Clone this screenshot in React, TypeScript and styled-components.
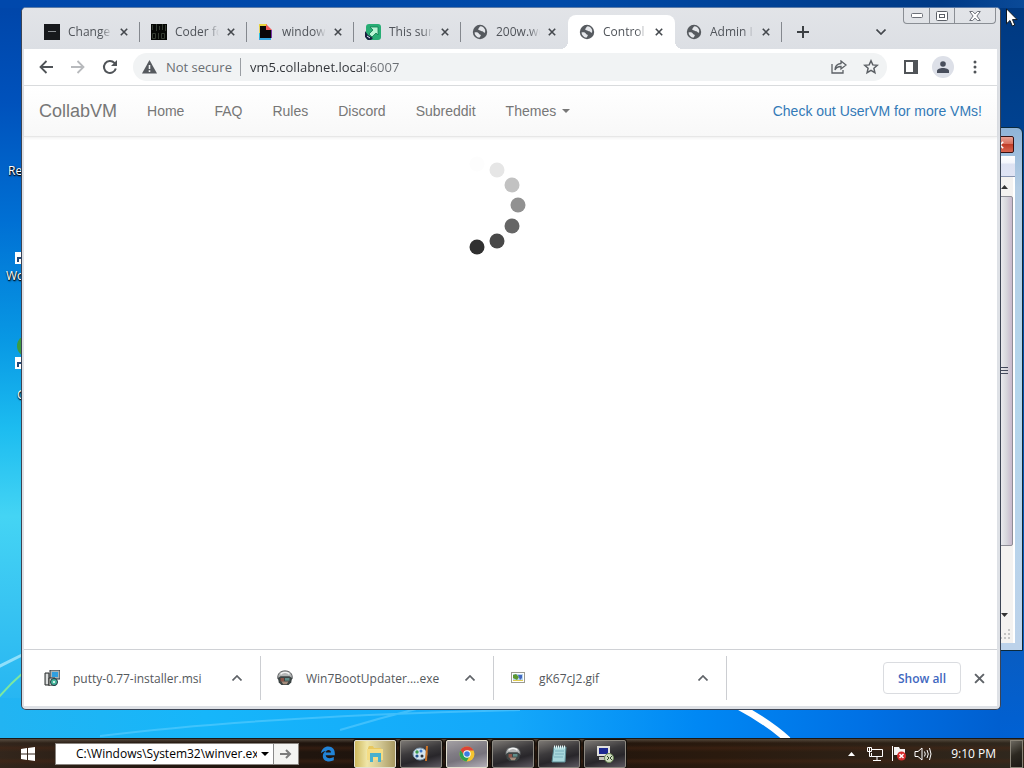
import React from "react";
import styled, { createGlobalStyle, css } from "styled-components";

const ui = `"Open Sans", "Noto Sans", sans-serif`;
const web = `"Liberation Sans", Arial, sans-serif`;

const GlobalStyle = createGlobalStyle`
  *, *::before, *::after { box-sizing: border-box; }
  html, body, #root { height: 100%; }
  body { margin: 0; overflow: hidden; font-family: ${ui}; font-size: 12px; }
  button, input { font: inherit; color: inherit; margin: 0; padding: 0; border: 0; background: none; outline: 0; }
  button { display: flex; align-items: center; justify-content: center; cursor: pointer; }
  a { text-decoration: none; }
  svg { display: block; flex: none; }
`;

const Screen = styled.div`
  height: 100vh;
  display: flex;
  flex-direction: column;
  overflow: hidden;
`;

const Desktop = styled.main`
  position: relative;
  flex: 1;
  min-height: 0;
  overflow: hidden;
  background:
    linear-gradient(to right, #0048ac 0%, #004aa8 55%, #003a86 92%, #0a4a98 100%) top / 100% 8px no-repeat,
    linear-gradient(to bottom, #00387f 0, #00418f 120px, #0a5cc0 640px, #0061d4 100%) right / 24px 100% no-repeat,
    linear-gradient(to right, #22b4f2 0, #16b6fa 20%, #14a8fa 50%, #0088f4 68%, #0070e4 85%, #005ccc 100%) bottom / 100% 40px no-repeat,
    linear-gradient(to bottom, #0045a8 0, #0052bc 14%, #0070d4 30%, #0898e4 46%, #1cbcf0 58%, #44d4f4 70%, #38c4f2 82%, #20b0f2 100%);
`;

const Streaks = styled.svg`
  position: absolute;
  left: 0;
  bottom: 0;
  width: 100%;
  height: 120px;
`;

const Shortcut = styled.span<{ $x: number; $y: number }>`
  position: absolute;
  left: ${(p) => p.$x}px;
  top: ${(p) => p.$y}px;
  color: #fff;
  font-size: 12px;
  line-height: 16px;
  white-space: nowrap;
  text-shadow: 1px 1px 2px #000, 0 1px 1px #000;
`;

const ShortcutIcon = styled.svg<{ $y: number }>`
  position: absolute;
  left: 14px;
  top: ${(p) => p.$y}px;
`;

const Pointer = styled.svg`
  position: absolute;
  right: 6px;
  top: 8px;
`;

/* Window behind the browser */

const BackWindow = styled.section`
  position: absolute;
  top: 127px;
  right: 1px;
  bottom: 87px;
  width: 320px;
  display: flex;
  flex-direction: column;
  padding: 0 7px 7px;
  border: 1px solid #0b2a3c;
  border-radius: 6px 6px 0 0;
  background: linear-gradient(to bottom, #8fb4d8 0, #b4cde4 60px, #b4d6ec 50%, #bcd2ea 100%);
`;

const BackTitle = styled.header`
  display: flex;
  justify-content: flex-end;
  height: 28px;
  padding-top: 8px;
`;

const BackClose = styled.button`
  width: 44px;
  height: 17px;
  margin-right: 1px;
  justify-content: flex-end;
  padding-right: 9px;
  border: 1px solid #3a1214;
  border-radius: 2px;
  color: #fff;
  font-size: 12px;
  background: linear-gradient(to bottom, #e8a194 0, #d8705e 45%, #c03c28 50%, #d86650 100%);
`;

const BackMenu = styled.div`
  height: 21px;
  border-bottom: 1px solid #8894b0;
  background: linear-gradient(to bottom, #fff 0, #f4f6fc 35%, #dde2f2 40%, #e0e4f4 100%);
`;

const BackBody = styled.div`
  flex: 1;
  display: flex;
  justify-content: flex-end;
  background: #fff;
`;

const ScrollTrack = styled.div`
  width: 19px;
  display: flex;
  flex-direction: column;
  align-items: center;
  background: #f4f2f0;
  border-right: 2px solid #fff;
`;

const ScrollThumb = styled.div`
  width: 16px;
  flex: 0 1 350px;
  display: flex;
  align-items: center;
  justify-content: center;
  border: 1px solid #8e8e96;
  border-radius: 2px;
  background: linear-gradient(to right, #f4f4f6, #d6d6dc 60%, #c8b8cc);
`;

const ScrollArrow = styled.div`
  height: 19px;
  display: flex;
  align-items: center;
`;

const Filler = styled.div`
  flex: 1;
`;

/* Browser window */

const Browser = styled.section`
  position: absolute;
  inset: 7px 23px 28px 21px;
  display: flex;
  flex-direction: column;
  border: 1px solid #3c4454;
  border-top-color: #5c7ca8;
  border-radius: 5px;
  background: #dee1e6;
  overflow: hidden;
`;

const TabStrip = styled.header`
  display: flex;
  height: 41px;
  padding: 0 4px 0 11px;
  align-items: flex-end;
  background: linear-gradient(to bottom, #e2e4e8, #dcdfe4);
`;

const Tab = styled.div<{ $active?: boolean; $divider?: boolean }>`
  position: relative;
  width: 107px;
  height: 34px;
  display: flex;
  align-items: center;
  padding-left: 11px;
  color: #50545a;
  ${(p) =>
    p.$active &&
    css`
      background: #fff;
      border-radius: 8px 8px 0 0;
      &::before, &::after {
        content: "";
        position: absolute;
        bottom: 0;
        width: 8px;
        height: 8px;
      }
      &::before { left: -8px; background: radial-gradient(circle at 0 0, transparent 8px, #fff 8px); }
      &::after { right: -8px; background: radial-gradient(circle at 100% 0, transparent 8px, #fff 8px); }
    `}
  ${(p) =>
    p.$divider &&
    css`
      &::after {
        content: "";
        position: absolute;
        right: 0;
        top: 7px;
        width: 1px;
        height: 20px;
        background: #84888e;
      }
    `}
`;

const TabTitle = styled.button`
  width: 44px;
  margin-left: 8px;
  justify-content: flex-start;
  overflow: hidden;
  white-space: nowrap;
  line-height: 18px;
  mask-image: linear-gradient(to right, #000 75%, transparent 100%);
`;

const TabClose = styled.button`
  width: 16px;
  height: 16px;
  margin-left: 4px;
`;

const StripButton = styled.button<{ $end?: boolean }>`
  width: 24px;
  height: 34px;
  margin-left: ${(p) => (p.$end ? "auto" : "9px")};
  margin-right: ${(p) => (p.$end ? "10px" : "0")};
`;

const Caption = styled.div`
  align-self: flex-start;
  display: flex;
  height: 16px;
  border: 1px solid #8a8e94;
  border-top: 0;
  border-radius: 0 0 4px 4px;
`;

const CaptionButton = styled.button<{ $wide?: boolean }>`
  width: ${(p) => (p.$wide ? 41 : 25)}px;
  & + & { border-left: 1px solid #8a8e94; }
`;

const Frame = styled.div`
  flex: 1;
  min-height: 0;
  display: flex;
  flex-direction: column;
  margin: 0 3px 3px 2px;
  background: #fff;
`;

const Toolbar = styled.div`
  display: flex;
  align-items: center;
  height: 37px;
  padding: 0 6px;
  border-bottom: 1px solid #dcdee0;
  background: #fff;
`;

const ToolButton = styled.button`
  width: 32px;
  height: 28px;
`;

const Avatar = styled.span`
  width: 22px;
  height: 22px;
  border-radius: 50%;
  display: flex;
  align-items: center;
  justify-content: center;
  background: #dde0e8;
`;

const Omnibox = styled.div`
  flex: 1;
  height: 28px;
  margin: 0 8px 0 7px;
  padding-left: 8px;
  display: flex;
  align-items: center;
  border-radius: 14px;
  background: #f1f3f4;
  font-size: 13px;
  color: #6a6e73;
`;

const Secure = styled.button`
  gap: 8px;
  padding-right: 8px;
  white-space: nowrap;
  border-right: 1px solid #9a9ea3;
`;

const Address = styled.input`
  flex: 1;
  min-width: 0;
  height: 20px;
  margin-left: 9px;
  background: linear-gradient(to right, #303338 115px, #6a6e73 115px);
  background-clip: text;
  -webkit-background-clip: text;
  -webkit-text-fill-color: transparent;
`;

const NavBar = styled.nav`
  display: flex;
  align-items: center;
  height: 51px;
  border-bottom: 1px solid #e7e7e7;
  background: linear-gradient(to bottom, #fff, #f8f8f8);
  box-shadow: 0 1px 3px rgba(0, 0, 0, 0.07);
  font-family: ${web};
  font-size: 14px;
  line-height: 20px;
  color: #777;
`;

const NavLink = styled.a<{ $kind?: "brand" | "promo" }>`
  display: flex;
  align-items: center;
  padding: 0 15px;
  white-space: nowrap;
  color: ${(p) => (p.$kind === "promo" ? "#337ab7" : "#777")};
  font-size: ${(p) => (p.$kind === "brand" ? 18 : 14)}px;
  margin-left: ${(p) => (p.$kind === "promo" ? "auto" : "0")};
`;

const Caret = styled.span`
  margin-left: 6px;
  border: 4px solid transparent;
  border-top-color: #777;
  border-bottom: 0;
`;

const Page = styled.div`
  flex: 1;
  display: flex;
  justify-content: center;
  align-items: flex-start;
  padding: 19px 51px 0 0;
`;

const Shelf = styled.footer`
  display: flex;
  align-items: center;
  height: 57px;
  padding: 0 6px 0 4px;
  border-top: 1px solid #d0d2d6;
`;

const Download = styled.div`
  width: 233px;
  height: 44px;
  display: flex;
  align-items: center;
  padding: 0 11px 0 16px;
  border-right: 1px solid #ccced2;
`;

const FileName = styled.button`
  flex: 1;
  justify-content: flex-start;
  gap: 13px;
  white-space: nowrap;
  color: #54585c;
`;

const FileIcon = styled.span`
  width: 16px;
  display: flex;
  justify-content: center;
`;

const SmallButton = styled.button`
  width: 24px;
  height: 24px;
`;

const ShowAll = styled.button`
  width: 78px;
  height: 32px;
  margin: 0 6px 0 auto;
  border: 1px solid #dadce0;
  border-radius: 4px;
  color: #3f68c0;
  font-weight: 600;
`;

/* Taskbar */

const Taskbar = styled.footer`
  display: flex;
  align-items: center;
  height: 30px;
  border-top: 1px solid #1c1814;
  color: #fff;
  background:
    linear-gradient(to bottom, rgba(120, 110, 95, 0.55) 0, transparent 4px),
    repeating-linear-gradient(to bottom, transparent 0 6px, rgba(80, 40, 20, 0.4) 9px, transparent 13px),
    linear-gradient(to right, #33261c 0, #241810 15%, #1c120c 45%, #2a1a0e 70%, #30281e 100%);
`;

const StartButton = styled.button`
  width: 55px;
  height: 28px;
`;

const AddressBar = styled.form`
  display: flex;
  width: 244px;
  height: 22px;
  border: 1px solid #8a8580;
  background: #fff;
  color: #000;
`;

const PathInput = styled.input`
  flex: 1;
  min-width: 0;
  margin-left: 20px;
`;

const PathButton = styled.button<{ $go?: boolean }>`
  width: ${(p) => (p.$go ? 25 : 16)}px;
  ${(p) => p.$go && "border-left: 1px solid #8a8a8a; background: #f4f4f2;"}
`;

const PinButton = styled.button`
  width: 40px;
  height: 28px;
  margin: 0 6px 0 9px;
`;

const TaskButton = styled.button<{ $tone?: "gold" | "light" }>`
  width: 42px;
  height: 28px;
  margin-right: 4px;
  border: 1px solid #8c8880;
  border-radius: 2px;
  box-shadow: 0 0 0 1px #14100c;
  background: ${(p) =>
    p.$tone === "gold"
      ? "linear-gradient(to right, #cdb85c, #f0e6a8 30%, #cfc490 65%, #a89860)"
      : p.$tone === "light"
      ? "linear-gradient(165deg, #a4a0a4 0, #807c84 40%, #77737c 60%, #b4b0b8 100%)"
      : "linear-gradient(165deg, #7c7874 0, #3c3a3c 40%, #28262a 65%, #5c5860 100%)"};
  border-color: ${(p) => (p.$tone ? "#e4e0d0" : "#8c8880")};
`;

const Tray = styled.div`
  display: flex;
  align-items: center;
  margin-left: auto;
  height: 28px;
`;

const TrayButton = styled.button`
  width: 24px;
  height: 24px;
`;

const Clock = styled.time`
  margin: 0 14px 0 16px;
  white-space: nowrap;
`;

const ShowDesktop = styled.button`
  width: 13px;
  height: 28px;
  margin-right: 1px;
  border: 1px solid #8a8478;
  background: linear-gradient(150deg, #6c6860, #2c2820 50%, #1c1814);
`;

/* Drawings */

const Cross = ({ size = 8, color = "#44484d", width = 2 }) => (
  <svg width={size} height={size} viewBox="0 0 10 10" fill="none" stroke={color} strokeWidth={width}>
    <path d="M1 1 9 9M9 1 1 9" />
  </svg>
);

const Chevron = ({ down = false, color = "#5f6368" }) => (
  <svg width="10" height="6" viewBox="0 0 10 6" fill="none" stroke={color} strokeWidth="1.7">
    <path d={down ? "M.5.5 5 5 9.5.5" : "M.5 5.5 5 1l4.500 4.500"} />
  </svg>
);

const Triangle = ({ up = false, color = "#000", w = 8 }) => (
  <svg width={w} height="4" viewBox="0 0 8 4" preserveAspectRatio="none">
    <path d={up ? "M0 4 4 0l4 4z" : "M0 0h8L4 4z"} fill={color} />
  </svg>
);

const Globe = () => (
  <svg width="16" height="16" viewBox="0 0 16 16">
    <circle cx="8" cy="8" r="7.200" fill="#565a5f" />
    <path
      d="M2.500 8.500c1.800-.4 3.600-.2 4.300 1.100.6 1.200 1.900.7 2 2 .1 1-1.100 1.100-1.300 2.100C4.800 13.500 2.700 11.400 2.500 8.500zM8.600 2.300c-1.500.6-1 1.500-2 2.100-.8.500-.4 1.700.9 1.800 1.200 0 1.300 1.100 2.500 1 1.400-.2 1.200 1.500 3 1.500.9-2.600-.8-6-4.400-6.400z"
      fill="#e4e6ea"
    />
  </svg>
);

const DarkDash = () => (
  <svg width="16" height="16">
    <rect width="16" height="16" fill="#17191c" />
    <rect x="4" y="7" width="8" height="1" fill="#8a8e92" />
  </svg>
);

const Matrix = () => (
  <svg width="16" height="16" fill="none" stroke="#343c32">
    <rect width="16" height="16" fill="#060806" stroke="none" />
    <path d="M1.500 1v5M5.500 0v7M8.500 2v4M11.500 0v6M14.500 1v6M1.500 9.500h3v5h-3zM7.500 9v6M10.500 9.500h3v5h-3z" />
  </svg>
);

const ColorFile = () => (
  <svg width="16" height="16">
    <path d="M1 0h8v3H1z" fill="#e8d33c" />
    <path d="M1 3h3v11H1z" fill="#e0d060" />
    <path d="M1 9h3v6H1z" fill="#29c0dc" />
    <path d="M8 0l6 6H8z" fill="#ef5a5a" />
    <path d="M11 6h3v8h-3z" fill="#7838a8" />
    <path d="M1 13h12v3H1z" fill="#38a8e0" />
    <path d="M2 2h6v4h5v8H2z" fill="#0a0808" />
  </svg>
);

const GreenArrow = () => (
  <svg width="16" height="16">
    <rect x="1" width="15" height="16" rx="3" fill="#27ad74" />
    <path d="M5 3h8v8l-2-2-4 4-3-3 4-4z" fill="#b8f4d4" stroke="#107850" strokeWidth=".8" />
    <path d="M0 7l3 4 5 3-2 2H3l-3-3z" fill="#182040" />
    <path d="M2 12l3 2" stroke="#e8f4ff" />
  </svg>
);

const PuttyIcon = () => (
  <svg width="16" height="16">
    <rect x="6" y="0" width="10" height="9" fill="#a8b4b8" stroke="#303438" />
    <rect x="8" y="2" width="6" height="5" fill="#2f9fe0" />
    <path d="M1 3h4v12H1z" fill="#b8bcbc" stroke="#2c3030" />
    <path d="M3 4v10" stroke="#fff" />
    <path d="M5 8h6v8H5z" fill="#d8dcd0" stroke="#303030" />
    <circle cx="10" cy="12" r="3.500" fill="#46b89c" stroke="#234" />
    <circle cx="10" cy="12" r="1" fill="#fff" />
  </svg>
);

const HelmetIcon = () => (
  <svg width="16" height="16" viewBox="0 0 18 18">
    <path d="M1 10C0 4 4 1 9 1s9 3 8 9z" fill="#b4b6b6" stroke="#4c4e50" />
    <path d="M4 5c2-3 8-3 10 0" stroke="#f4f4f4" strokeWidth="1.500" fill="none" />
    <path d="M1 9l3-2h10l3 2-1 5-3 3H5l-3-3z" fill="#3c4444" />
    <path d="M4 9h4v4H4z" fill="#8c5448" />
    <path d="M9 9h5v3H9z" fill="#5f8c88" />
    <path d="M5 13h8l-2 3H7z" fill="#a48c7c" />
  </svg>
);

const GifIcon = () => (
  <svg width="14" height="12">
    <rect x=".5" y=".5" width="13" height="10" fill="#fff" stroke="#9a9a90" />
    <rect x="2" y="2" width="10" height="7" fill="#b8d8f0" />
    <path d="M2 3l3-1 3 3-2 3-4-2z" fill="#5c9830" />
    <path d="M7 3h4v3l-2 2z" fill="#4468c0" />
    <path d="M2 8h10v1H2z" fill="#e0cc50" />
  </svg>
);

const spinnerDots: [number, number, string][] = [
  [42, 8, "#fdfdfd"],
  [62, 14, "#e6e6e6"],
  [77, 29, "#c2c2c2"],
  [83, 49, "#919191"],
  [77, 70, "#666"],
  [62, 85, "#484848"],
  [42, 91, "#303030"],
];

const Spinner = () => (
  <svg width="100" height="100" role="img" aria-label="Loading">
    {spinnerDots.map(([x, y, fill]) => (
      <circle key={y} cx={x} cy={y} r="7.500" fill={fill} />
    ))}
  </svg>
);

const tabs = [
  { title: "Change", icon: <DarkDash />, divider: true },
  { title: "Coder fo", icon: <Matrix />, divider: true },
  { title: "window", icon: <ColorFile />, divider: true },
  { title: "This sur", icon: <GreenArrow />, divider: true },
  { title: "200w.we", icon: <Globe /> },
  { title: "Control", icon: <Globe />, active: true },
  { title: "Admin I", icon: <Globe />, divider: true },
];

const downloads = [
  { name: "putty-0.77-installer.msi", icon: <PuttyIcon /> },
  { name: "Win7BootUpdater....exe", icon: <HelmetIcon /> },
  { name: "gK67cJ2.gif", icon: <GifIcon /> },
];

const tasks: { name: string; tone?: "gold" | "light"; icon: React.ReactNode }[] = [
  {
    name: "Explorer",
    tone: "gold",
    icon: (
      <svg width="18" height="18">
        <path d="M2 3l1-2h4l1 2h7v4H2z" fill="#e8c860" />
        <path d="M1 4h16v11H1z" fill="#f4dc84" />
        <path d="M4 17V8h11v9h-3v-5H7v5z" fill="#48b0cc" />
      </svg>
    ),
  },
  {
    name: "Paint",
    icon: (
      <svg width="18" height="18">
        <ellipse cx="8" cy="9" rx="7" ry="6" fill="#d4e4ee" stroke="#7c98b0" />
        <circle cx="5" cy="7" r="1.700" fill="#3c9c50" />
        <circle cx="9" cy="6" r="1.500" fill="#3c74c8" />
        <circle cx="5" cy="11" r="1.600" fill="#20508c" />
        <circle cx="10" cy="11" r="1.500" fill="#30343c" />
        <path d="M14 1h2l-1 15h-2z" fill="#cc7428" />
      </svg>
    ),
  },
  {
    name: "Chrome",
    tone: "light",
    icon: (
      <svg width="16" height="16" viewBox="0 0 16 16">
        <circle cx="8" cy="8" r="7.500" fill="#f4c430" />
        <path d="M1.500 4.300A7.500 7.500 0 0 1 14.600 4.500H8L5 10z" fill="#dc4437" />
        <path d="M1.500 4.300A7.500 7.500 0 0 0 7.500 15.500l3.500-6-6-.5z" fill="#30a050" />
        <circle cx="8" cy="8" r="3.700" fill="#fff" />
        <circle cx="8" cy="8" r="2.800" fill="#3c7ce0" />
      </svg>
    ),
  },
  { name: "Win7BootUpdater", icon: <HelmetIcon /> },
  {
    name: "Notepad",
    icon: (
      <svg width="16" height="18">
        <path d="M3 2h12l-1 15H1z" fill="#a8d8dc" stroke="#5c8c94" />
        <path d="M4 6h9M4 9h9M3 12h9" stroke="#7ab0bc" />
        <path d="M3 2h12" stroke="#e8f4f4" strokeWidth="3" strokeDasharray="1 1" />
      </svg>
    ),
  },
  {
    name: "Remote session",
    icon: (
      <svg width="18" height="18">
        <path d="M1 1h13v10H1z" fill="#e0e0dc" />
        <path d="M3 3h9v6H3z" fill="#1c2890" />
        <path d="M3 12h9v3H3z" fill="#c4c4bc" />
        <circle cx="13" cy="13" r="4.500" fill="#d0dcc0" stroke="#6c8858" />
        <path d="M11 11l2 2-2 2M16 11l-2 2 2 2" stroke="#304828" fill="none" />
      </svg>
    ),
  },
];

export default function App() {
  return (
    <Screen>
      <GlobalStyle />
      <Desktop>
        <Streaks viewBox="0 0 1024 120" preserveAspectRatio="none" fill="none">
          <path d="M-2 49Q12 42 24 36" stroke="#a8e8fc" strokeWidth="3" opacity=".8" />
          <path d="M-2 80Q10 66 24 54" stroke="#7ce8a0" strokeWidth="2" />
          <path d="M340 112Q380 100 420 90M100 118Q260 98 520 92" stroke="#74d4ff" strokeWidth="2" opacity=".45" />
          <path d="M738 88Q768 104 788 122" stroke="#fff" strokeWidth="7" />
        </Streaks>
        <ShortcutIcon $y={252} width="12" height="14">
          <path d="M1 0h9v12H1z" fill="#fff" />
          <path d="M4 10V6h5" stroke="#204878" strokeWidth="2" fill="none" />
        </ShortcutIcon>
        <ShortcutIcon $y={334} width="12" height="38">
          <circle cx="14" cy="12" r="11" fill="#3c9c40" />
          <path d="M1 23h9v12H1z" fill="#fff" />
          <path d="M4 33v-4h5" stroke="#204878" strokeWidth="2" fill="none" />
        </ShortcutIcon>
        <Shortcut $x={8} $y={163}>Re</Shortcut>
        <Shortcut $x={6} $y={268}>Wo</Shortcut>
        <Shortcut $x={17} $y={387}>G</Shortcut>

        <BackWindow aria-label="Background window">
          <BackTitle>
            <BackClose aria-label="Close background window">
              <Cross color="#fff" width={2} />
            </BackClose>
          </BackTitle>
          <BackMenu />
          <BackBody>
            <ScrollTrack>
              <ScrollArrow>
                <Triangle up w={7} color="#333" />
              </ScrollArrow>
              <ScrollThumb>
                <svg width="8" height="8" stroke="#444a5c">
                  <path d="M0 .5h7M0 3.500h7M0 6.500h7" />
                </svg>
              </ScrollThumb>
              <Filler />
              <ScrollArrow>
                <Triangle w={7} color="#333" />
              </ScrollArrow>
              <ScrollArrow>
                <svg width="12" height="12" fill="#c4c4c4">
                  <path d="M9 1h2v2H9zM9 5h2v2H9zM9 9h2v2H9zM5 5h2v2H5zM5 9h2v2H5zM1 9h2v2H1z" />
                </svg>
              </ScrollArrow>
            </ScrollTrack>
          </BackBody>
        </BackWindow>

        <Browser aria-label="Browser">
          <TabStrip>
            {tabs.map((t) => (
              <Tab key={t.title} $active={t.active} $divider={t.divider}>
                {t.icon}
                <TabTitle>{t.title}</TabTitle>
                <TabClose aria-label={`Close ${t.title}`}>
                  <Cross />
                </TabClose>
              </Tab>
            ))}
            <StripButton aria-label="New tab">
              <svg width="12" height="12" stroke="#3c4044" strokeWidth="2">
                <path d="M6 0v12M0 6h12" />
              </svg>
            </StripButton>
            <StripButton $end aria-label="Search tabs">
              <Chevron down color="#44484d" />
            </StripButton>
            <Caption>
              <CaptionButton aria-label="Minimize">
                <svg width="12" height="5">
                  <rect x=".5" y=".5" width="11" height="4" rx="1" fill="#fff" stroke="#6c7078" />
                </svg>
              </CaptionButton>
              <CaptionButton aria-label="Maximize">
                <svg width="12" height="10" fill="#fff" stroke="#5c6068">
                  <rect x=".5" y=".5" width="11" height="9" rx="1" />
                  <rect x="3.500" y="3.500" width="5" height="3" />
                </svg>
              </CaptionButton>
              <CaptionButton $wide aria-label="Close">
                <svg width="12" height="10" viewBox="0 0 12 10">
                  <path
                    d="M.7.500h3L6 2.900 8.300.500h3L7.900 5l3.400 4.500h-3L6 7.100 3.700 9.500h-3L4.100 5z"
                    fill="#fff"
                    stroke="#6c7078"
                  />
                </svg>
              </CaptionButton>
            </Caption>
          </TabStrip>

          <Frame>
            <Toolbar>
              <ToolButton aria-label="Back">
                <svg width="14" height="14" fill="none" stroke="#505458" strokeWidth="1.800">
                  <path d="M14 7H1.500M7.500 1l-6 6 6 6" />
                </svg>
              </ToolButton>
              <ToolButton aria-label="Forward">
                <svg width="14" height="14" fill="none" stroke="#b8babd" strokeWidth="1.800">
                  <path d="M0 7h12.500M6.500 1l6 6-6 6" />
                </svg>
              </ToolButton>
              <ToolButton aria-label="Reload">
                <svg width="16" height="16" fill="none" stroke="#505458" strokeWidth="2">
                  <path d="M13.800 9.500A6 6 0 1 1 12.400 3.900L14 5.500" />
                  <path d="M15 1v6H9z" fill="#505458" stroke="none" />
                </svg>
              </ToolButton>
              <Omnibox>
                <Secure>
                  <svg width="17" height="14" viewBox="0 0 17 14">
                    <path d="M8.500 0 16 13.500H1z" fill="#55595e" />
                    <path d="M8.500 5v4M8.500 10.200v1.700" stroke="#f1f3f4" strokeWidth="1.600" />
                  </svg>
                  Not secure
                </Secure>
                <Address aria-label="Address" defaultValue="vm5.collabnet.local:6007" />
                <ToolButton aria-label="Share">
                  <svg width="16" height="14" fill="none" stroke="#5c6065" strokeWidth="1.300">
                    <path d="M1 4v9h11v-3" />
                    <path d="M10 1l5 4-5 4V6.500c-3 0-5 1-6 3.500 0-4 2-6 6-6.500z" />
                  </svg>
                </ToolButton>
                <ToolButton aria-label="Bookmark this tab">
                  <svg width="16" height="16" fill="none" stroke="#5c6065" strokeWidth="1.500">
                    <path d="M8 1.800l1.800 4.100 4.500.4-3.400 3 1 4.400L8 11.400l-3.900 2.300 1-4.400-3.400-3 4.500-.4z" />
                  </svg>
                </ToolButton>
              </Omnibox>
              <ToolButton aria-label="Side panel">
                <svg width="14" height="14">
                  <path d="M1 1h12v12H1z" fill="none" stroke="#505458" strokeWidth="2" />
                  <path d="M9 1h4v12H9z" fill="#505458" />
                </svg>
              </ToolButton>
              <ToolButton aria-label="Profile">
                <Avatar>
                  <svg width="12" height="12" fill="#484e5c">
                    <circle cx="6" cy="3" r="2.800" />
                    <path d="M0 12v-2c0-2 3-3 6-3s6 1 6 3v2z" />
                  </svg>
                </Avatar>
              </ToolButton>
              <ToolButton aria-label="Menu">
                <svg width="4" height="14" fill="#505458">
                  <circle cx="2" cy="2" r="1.500" />
                  <circle cx="2" cy="7" r="1.500" />
                  <circle cx="2" cy="12" r="1.500" />
                </svg>
              </ToolButton>
            </Toolbar>

            <NavBar>
              <NavLink href="#" $kind="brand">CollabVM</NavLink>
              <NavLink href="#home">Home</NavLink>
              <NavLink href="#faq">FAQ</NavLink>
              <NavLink href="#rules">Rules</NavLink>
              <NavLink href="#discord">Discord</NavLink>
              <NavLink href="#subreddit">Subreddit</NavLink>
              <NavLink href="#themes">
                Themes <Caret />
              </NavLink>
              <NavLink href="#uservm" $kind="promo">Check out UserVM for more VMs!</NavLink>
            </NavBar>

            <Page>
              <Spinner />
            </Page>

            <Shelf>
              {downloads.map((d) => (
                <Download key={d.name}>
                  <FileName>
                    <FileIcon>{d.icon}</FileIcon>
                    {d.name}
                  </FileName>
                  <SmallButton aria-label={`Options for ${d.name}`}>
                    <Chevron />
                  </SmallButton>
                </Download>
              ))}
              <ShowAll>Show all</ShowAll>
              <SmallButton aria-label="Close downloads bar">
                <Cross size={11} color="#5f6368" width={1.8} />
              </SmallButton>
            </Shelf>
          </Frame>
        </Browser>

        <Pointer width="12" height="19" viewBox="0 0 12 19">
          <path d="M.5.800v15l3.500-3.300 2.300 5.500 2.500-1L6.500 11.600h4.700z" fill="#fff" stroke="#101820" />
        </Pointer>
      </Desktop>

      <Taskbar>
        <StartButton aria-label="Start">
          <svg width="14" height="14" fill="#fff">
            <path d="M0 2l6-1v5.500H0zM7 .900 14 0v6.500H7zM0 7.500h6V13l-6-1zM7 7.500h7V14l-7-.9z" />
          </svg>
        </StartButton>
        <AddressBar onSubmit={(e) => e.preventDefault()}>
          <PathInput aria-label="Path" defaultValue="C:\Windows\System32\winver.ex" />
          <PathButton type="button" aria-label="Recent paths">
            <Triangle />
          </PathButton>
          <PathButton $go type="submit" aria-label="Go">
            <svg width="12" height="10" fill="none" stroke="#7c7c7c" strokeWidth="2">
              <path d="M0 5h10M6 1l4 4-4 4" />
            </svg>
          </PathButton>
        </AddressBar>
        <PinButton aria-label="Edge">
          <svg width="16" height="16" viewBox="0 0 16 16">
            <path
              d="M1 7.200C1.800 3 4.500.600 8.300.600c4.300 0 6.500 3 6.500 6.700v1.900H5.700c.2 2 1.800 3 4 3 1.500 0 2.900-.4 4.100-1.100v3.200c-1.300.7-2.900 1.100-4.700 1.100-3.800 0-6.300-2.200-6.300-5.500 0-2.200 1.200-4 3.100-5C3.800 5.200 2.200 5.800 1 7.200zM5.800 6.600h5.200c0-1.500-.9-2.500-2.500-2.500S6 5.100 5.800 6.600z"
              fill="#2284d8"
            />
          </svg>
        </PinButton>
        {tasks.map((t) => (
          <TaskButton key={t.name} $tone={t.tone} aria-label={t.name}>
            {t.icon}
          </TaskButton>
        ))}
        <Tray>
          <TrayButton aria-label="Show hidden icons">
            <Triangle up color="#fff" w={7} />
          </TrayButton>
          <TrayButton aria-label="Network">
            <svg width="16" height="14" fill="none" stroke="#fff">
              <path d="M5 2.500h10.500v7H4.500V6M10 10v3M6 13.500h8M2.500 5v4.500h2" />
              <path d="M.5.500h4v4h-4zM2.500 1v3" />
            </svg>
          </TrayButton>
          <TrayButton aria-label="Action center">
            <svg width="16" height="15">
              <path d="M1.500 0v15" stroke="#fff" />
              <path d="M3 1h5l1 2h5v6H3z" fill="#f4f4f4" />
              <circle cx="10.500" cy="10" r="4.500" fill="#d42c2c" />
              <path d="M8.500 8l4 4M12.500 8l-4 4" stroke="#fff" strokeWidth="1.500" />
            </svg>
          </TrayButton>
          <TrayButton aria-label="Volume">
            <svg width="18" height="14" fill="none" stroke="#fff">
              <path d="M1 4.500h3l4-3.500v12L4 9.500H1zM10.500 4.500q1.500 2.500 0 5M13 3q2.500 4 0 8M15.500 1q3 6 0 12" />
            </svg>
          </TrayButton>
          <Clock>9:10 PM</Clock>
          <ShowDesktop aria-label="Show desktop" />
        </Tray>
      </Taskbar>
    </Screen>
  );
}
